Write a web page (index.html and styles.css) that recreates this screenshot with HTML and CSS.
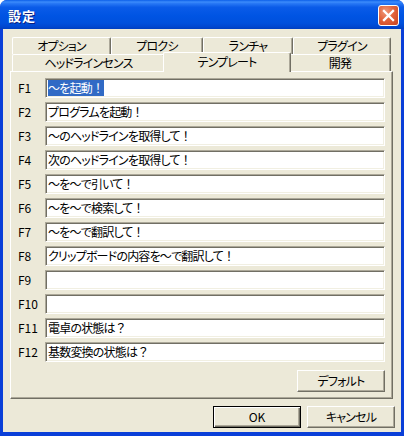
FILE: index.html
```html
<!DOCTYPE html>
<html lang="ja">
<head>
<meta charset="utf-8">
<title>設定</title>
<link rel="stylesheet" href="styles.css">
</head>
<body>
<div class="window">
  <div class="titlebar">
    <span class="title">設定</span>
    <span class="close"><svg width="13" height="13" viewBox="0 0 13 13"><path d="M2 2 L11 11 M11 2 L2 11" stroke="#fff" stroke-width="2.3" stroke-linecap="square" fill="none"/></svg></span>
  </div>
  <div class="client">
    <div class="tabs">
      <div class="tabrow">
        <div class="tab t-opt">オプション</div>
        <div class="tab t-proxy">プロクシ</div>
        <div class="tab t-launch">ランチャ</div>
        <div class="tab t-plugin">プラグイン</div>
      </div>
      <div class="tabrow">
        <div class="tab t-head">ヘッドラインセンス</div>
        <div class="tab t-tmpl selected">テンプレート</div>
        <div class="tab t-dev">開発</div>
      </div>
    </div>
    <div class="panel">
      <div class="rows">
        <span class="key">F1</span><div class="field"><span class="sel"><span class="fw">～</span>を起動<span class="fw">！</span></span></div>
        <span class="key">F2</span><div class="field">プログラムを起動<span class="fw">！</span></div>
        <span class="key">F3</span><div class="field"><span class="fw">～</span>のヘッドラインを取得して<span class="fw">！</span></div>
        <span class="key">F4</span><div class="field">次のヘッドラインを取得して<span class="fw">！</span></div>
        <span class="key">F5</span><div class="field"><span class="fw">～</span>を<span class="fw">～</span>で引いて<span class="fw">！</span></div>
        <span class="key">F6</span><div class="field"><span class="fw">～</span>を<span class="fw">～</span>で検索して<span class="fw">！</span></div>
        <span class="key">F7</span><div class="field"><span class="fw">～</span>を<span class="fw">～</span>で翻訳して<span class="fw">！</span></div>
        <span class="key">F8</span><div class="field">クリップボードの内容を<span class="fw">～</span>で翻訳して<span class="fw">！</span></div>
        <span class="key">F9</span><div class="field"></div>
        <span class="key">F10</span><div class="field"></div>
        <span class="key">F11</span><div class="field">電卓の状態は<span class="fw">？</span></div>
        <span class="key">F12</span><div class="field">基数変換の状態は<span class="fw">？</span></div>
      </div>
      <div class="panel-foot"><button class="btn">デフォルト</button></div>
    </div>
    <div class="footer">
      <button class="btn default">OK</button>
      <button class="btn">キャンセル</button>
    </div>
  </div>
</div>
</body>
</html>
```

FILE: styles.css
```css
html, body {
  margin: 0;
  padding: 0;
  background: #ffffff;
}

body {
  font-family: "Noto Sans CJK JP", "Liberation Sans", sans-serif;
  font-size: 12px;
  font-feature-settings: "palt";
  letter-spacing: -0.8px;
  color: #000;
}

.fw {
  font-feature-settings: normal;
}

.window {
  width: 404px;
  height: 436px;
  box-sizing: border-box;
  display: flex;
  flex-direction: column;
  background: #0a3fd8;
  border-radius: 7px 7px 0 0;
  overflow: hidden;
}

.titlebar {
  height: 29px;
  flex: none;
  display: flex;
  align-items: center;
  justify-content: space-between;
  padding: 1px 5px 0 8px;
  box-sizing: border-box;
  background: linear-gradient(#0c5fe9 0%, #3c8cfb 7%, #2878f5 12%, #0a5be8 25%, #0054e3 55%, #0050dc 80%, #0046cf 93%, #003fbe 100%);
}

.title {
  color: #fff;
  font-size: 13px;
  font-weight: 700;
  letter-spacing: 1px;
  text-shadow: 1px 1px 0 #0a1e80;
}

.close {
  width: 21px;
  height: 21px;
  box-sizing: border-box;
  border: 1px solid #fff;
  border-radius: 3px;
  background: radial-gradient(circle at 35% 30%, #f09a7b 0%, #e2643c 45%, #c8431f 100%);
  display: flex;
  align-items: center;
  justify-content: center;
}

.client {
  flex: 1;
  margin: 0 3px 4px 3px;
  background: #ece9d8;
  padding: 8px 8px 0 7px;
  display: flex;
  flex-direction: column;
}

.tabs {
  padding-left: 2px;
  height: 34px;
  display: flex;
  flex-direction: column;
}

.tabrow {
  display: flex;
  align-items: flex-end;
  height: 17px;
}

.tab {
  height: 17px;
  box-sizing: border-box;
  line-height: 15px;
  text-align: center;
  background: #ece9d8;
  border-top: 1px solid #fff;
  border-left: 1px solid #fff;
  border-right: 1px solid #716f64;
  border-radius: 2px 2px 0 0;
  box-shadow: inset -1px 0 #aca899;
  white-space: nowrap;
}

.t-opt { width: 99px; }
.t-proxy { width: 92px; }
.t-launch { width: 90px; }
.t-plugin { width: 98px; }
.t-head { width: 153px; }
.t-tmpl { width: 124px; }
.t-dev { width: 102px; }

.tab.selected {
  position: relative;
  z-index: 2;
  width: 128px;
  height: 20px;
  margin: 0 -2px -1px -2px;
  padding-top: 1px;
}

.panel {
  height: 328px;
  box-sizing: border-box;
  border: 1px solid;
  border-color: #fff #716f64 #716f64 #fff;
  box-shadow: inset -1px -1px #aca899;
  padding: 6px 7px 0 7px;
  display: flex;
  flex-direction: column;
}

.rows {
  display: grid;
  grid-template-columns: 27px 1fr;
  grid-auto-rows: 20px;
  row-gap: 4px;
  align-items: center;
}

.key {
  line-height: 20px;
  letter-spacing: 0;
}

.field {
  height: 20px;
  box-sizing: border-box;
  background: #fff;
  border: 1px solid;
  border-color: #aca899 #fff #fff #aca899;
  box-shadow: inset 1px 1px #716f64, inset -1px -1px #f1efe2;
  padding: 1px 2px 0 2px;
  line-height: 16px;
  white-space: nowrap;
  overflow: hidden;
}

.sel {
  background: #316ac5;
  color: #fff;
  display: inline-block;
  line-height: 16px;
  padding-right: 1px;
}

.panel-foot {
  display: flex;
  justify-content: flex-end;
  margin-top: 8px;
}

.btn {
  width: 88px;
  height: 22px;
  box-sizing: border-box;
  font: inherit;
  font-feature-settings: "palt";
  letter-spacing: -0.8px;
  color: #000;
  background: #ece9d8;
  border: 1px solid;
  border-color: #fff #716f64 #716f64 #fff;
  box-shadow: inset -1px -1px #aca899;
  padding: 0;
  line-height: 18px;
}

.btn.default {
  border: 1px solid #000;
  letter-spacing: 0;
  box-shadow: inset 1px 1px #fff, inset -1px -1px #716f64, inset -2px -2px #aca899;
}

.footer {
  display: flex;
  justify-content: flex-end;
  gap: 6px;
  margin-top: 7px;
  margin-right: -2px;
}
```
